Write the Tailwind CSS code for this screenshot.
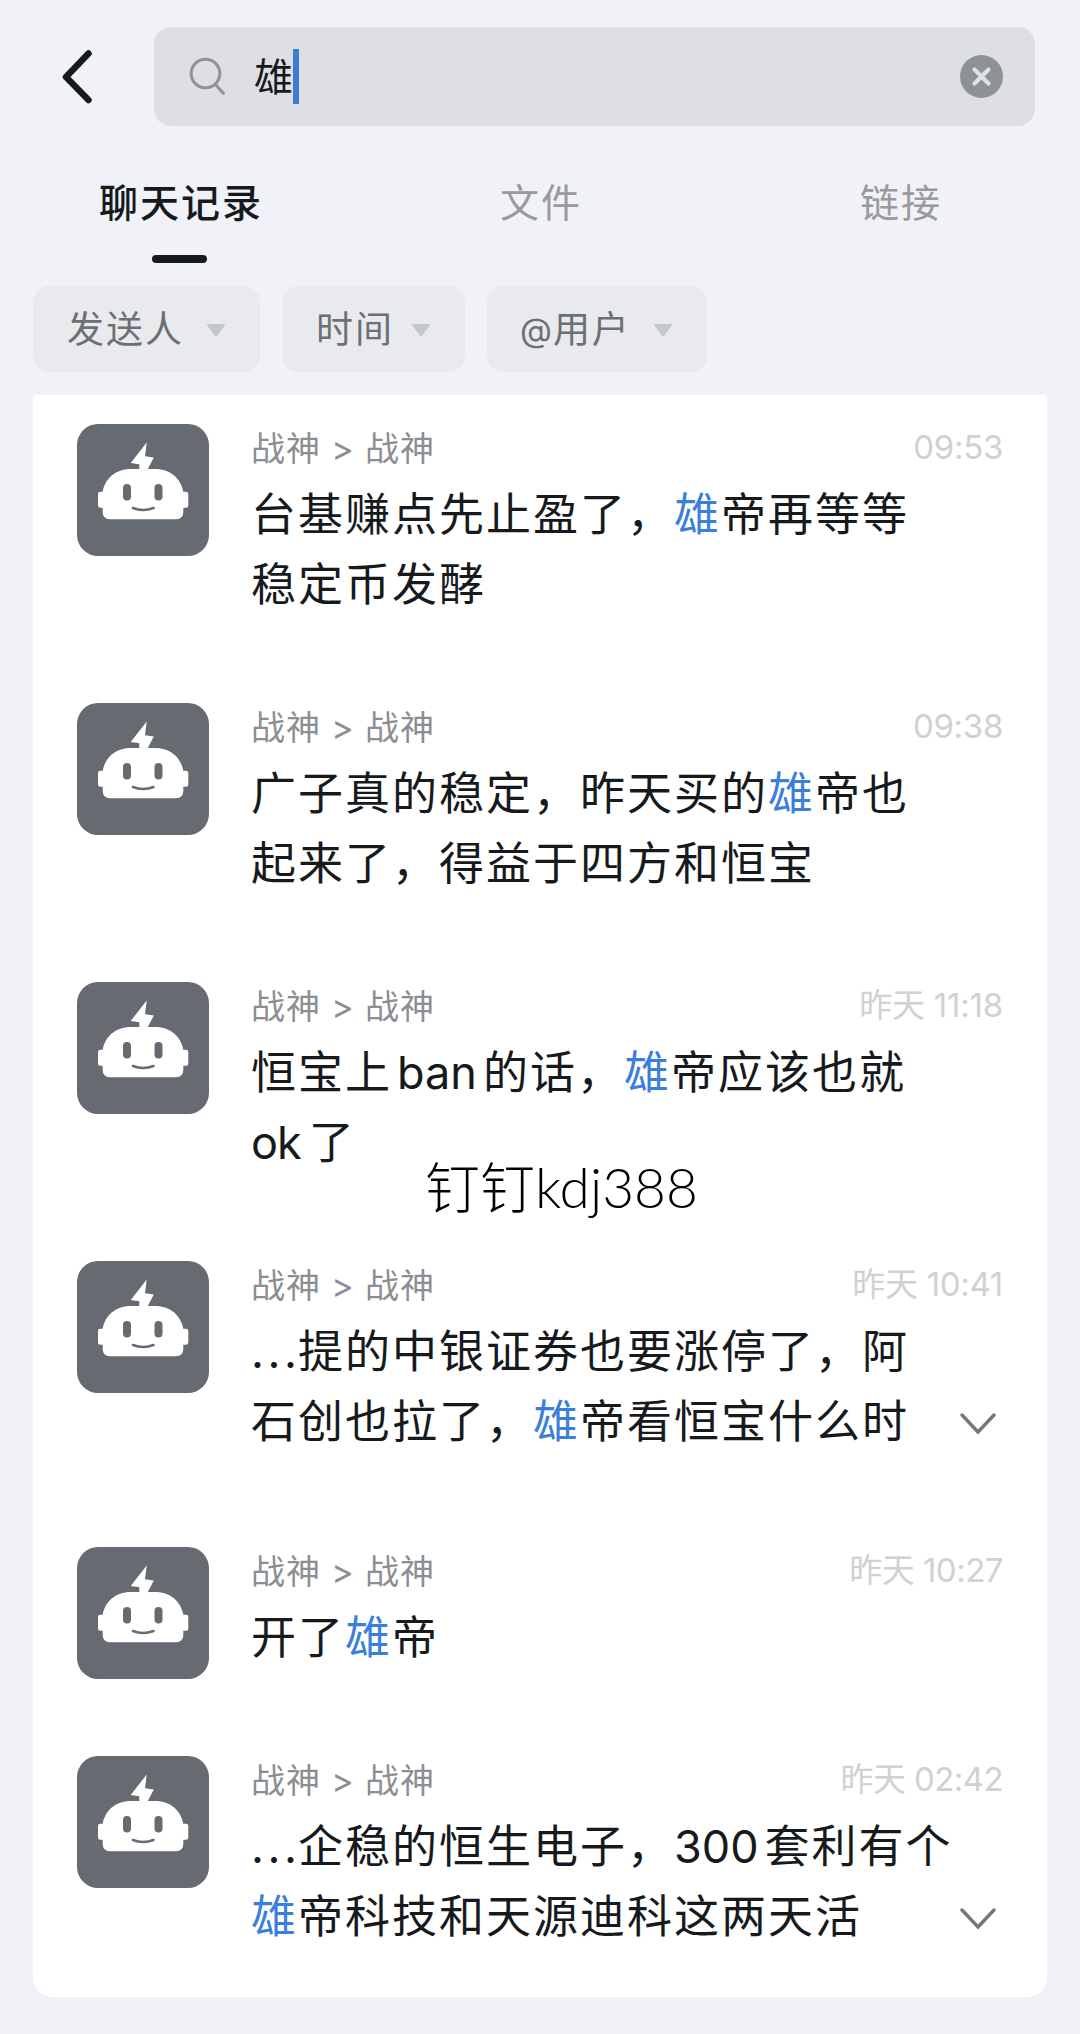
<!DOCTYPE html>
<html lang="zh-CN">
  <head>
    <meta charset="UTF-8" />
    <meta name="viewport" content="width=device-width, initial-scale=1.0" />
    <script src="https://cdn.jsdelivr.net/npm/@tailwindcss/browser@4"></script>
    <title>聊天记录</title>
  </head>
  <body class="bg-[#f0f2f7] text-[#171a1d] font-['Inter','Noto_Sans_CJK_SC',sans-serif] w-[1080px] h-[2034px] relative overflow-hidden">
    <!-- Icons -->
    <svg class="hidden">
      <symbol id="robot" viewBox="0 0 132 132">
        <rect width="132" height="132" rx="21" fill="#666b72" />
        <path d="M69.7 18.5L53.7 39L62.3 40.3V46H70.3L76.8 33.6L68 32.2Z" fill="#fff" />
        <path d="M54 45H78C94 45 104 55 106.3 67.7H109Q111.3 67.7 111.3 70V81.5Q111.3 83.7 109 83.7H106.3V88Q106.3 95.2 99 95.2H33Q25.7 95.2 25.7 88V83.7H23.3Q21 83.7 21 81.5V70Q21 67.7 23.3 67.7H25.7C28 55 38 45 54 45Z" fill="#fff" />
        <rect x="46" y="60" width="8" height="16.5" rx="4" fill="#666b72" />
        <rect x="77.5" y="60" width="8" height="16.5" rx="4" fill="#666b72" />
        <path d="M56 84Q66 88 76.5 84" fill="none" stroke="#666b72" stroke-width="2.6" stroke-linecap="round" />
      </symbol>
      <symbol id="caret" viewBox="0 0 20 13">
        <path d="M2 1H18L10 11.5Z" fill="#c3c7ca" stroke="#c3c7ca" stroke-width="2" stroke-linejoin="round" />
      </symbol>
      <symbol id="expand" viewBox="0 0 36 22">
        <path d="M2 2L18 19L34 2" fill="none" stroke="#747678" stroke-width="3.4" stroke-linecap="round" />
      </symbol>
    </svg>

    <!-- Search -->
    <div class="flex items-center pt-[27px] pl-[60px] pr-[45px]">
      <svg class="w-[34px] h-[54px]" viewBox="0 0 34 54" fill="none" stroke="#171a1d" stroke-width="6.5" stroke-linecap="round" stroke-linejoin="round">
        <path d="M28.5 3.5L6 27L28.5 50" />
      </svg>
      <div class="flex items-center flex-1 h-[99px] ml-[60px] pl-[35px] pr-[32px] rounded-[17px] bg-[#dedfe3]">
        <svg class="w-[38px] h-[40px]" viewBox="0 0 38 40" fill="none" stroke="#909396" stroke-width="3" stroke-linecap="round">
          <circle cx="16.5" cy="16.5" r="14.3" />
          <path d="M26 27L34.5 36.5" />
        </svg>
        <div class="ml-[27px] text-[39px] leading-[56px]">雄</div>
        <div class="w-[6px] h-[55px] bg-[#3d7bd6]"></div>
        <svg class="w-[43px] h-[43px] ml-auto" viewBox="0 0 43 43">
          <circle cx="21.5" cy="21.5" r="21.5" fill="#8f9295" />
          <path d="M14.5 14.5L28.5 28.5M28.5 14.5L14.5 28.5" stroke="#e0e1e5" stroke-width="4.2" stroke-linecap="round" />
        </svg>
      </div>
    </div>

    <!-- Tabs -->
    <div class="grid grid-cols-3 pt-[49px] h-[160px] text-[39px] leading-[56px] tracking-[2px] text-center text-[#989a9d]">
      <div class="flex flex-col items-center">
        <div class="pl-[2px] text-[#171a1d] font-medium">聊天记录</div>
        <div class="w-[55px] h-[8px] mt-[24px] mr-[1px] rounded-full bg-[#171a1d]"></div>
      </div>
      <div class="pl-[2px]">文件</div>
      <div class="pl-[2px]">链接</div>
    </div>

    <!-- Filters -->
    <div class="flex gap-[22px] pl-[33px] h-[109px] text-[37px] leading-[84px] tracking-[2px] text-[#6c6f73]">
      <div class="flex items-center w-[227px] h-[86px] pt-[2px] pl-[34px] rounded-[16px] bg-[#e9eaee]">
        发送人<svg class="w-[20px] h-[13px] ml-[22px]"><use href="#caret" /></svg>
      </div>
      <div class="flex items-center w-[183px] h-[86px] pt-[2px] pl-[34px] rounded-[16px] bg-[#e9eaee]">
        时间<svg class="w-[20px] h-[13px] ml-[17px]"><use href="#caret" /></svg>
      </div>
      <div class="flex items-center w-[220px] h-[86px] pt-[2px] pl-[33px] rounded-[16px] bg-[#e9eaee]">
        <span class="text-[33px] tracking-[1px]">@</span>用户<svg class="w-[20px] h-[13px] ml-[22px]"><use href="#caret" /></svg>
      </div>
    </div>

    <!-- Results -->
    <div class="mx-[33px] h-[1602px] pt-[29px] pl-[44px] pr-[44px] bg-white rounded-t-[4px] rounded-b-[20px]">
      <div class="flex h-[279px]">
        <svg class="w-[132px] h-[132px] shrink-0"><use href="#robot" /></svg>
        <div class="ml-[42px] flex-1">
          <div class="flex justify-between">
            <div class="pt-px text-[34px] leading-[48px] tracking-[0.9px] text-[#8b8e92]">战神 &gt; 战神</div>
            <div class="text-[33px] leading-[47px] tracking-[-0.3px] text-[#cfd1d4]">09:53</div>
          </div>
          <div class="mt-[7px] text-[45px] leading-[70px] tracking-[2px] whitespace-nowrap">
            台基赚点先止盈了，<span class="text-[#3a7fdb]">雄</span>帝再等等<br />稳定币发酵
          </div>
        </div>
      </div>

      <div class="flex h-[279px]">
        <svg class="w-[132px] h-[132px] shrink-0"><use href="#robot" /></svg>
        <div class="ml-[42px] flex-1">
          <div class="flex justify-between">
            <div class="pt-px text-[34px] leading-[48px] tracking-[0.9px] text-[#8b8e92]">战神 &gt; 战神</div>
            <div class="text-[33px] leading-[47px] tracking-[-0.3px] text-[#cfd1d4]">09:38</div>
          </div>
          <div class="mt-[7px] text-[45px] leading-[70px] tracking-[2px] whitespace-nowrap">
            广子真的稳定，昨天买的<span class="text-[#3a7fdb]">雄</span>帝也<br />起来了，得益于四方和恒宝
          </div>
        </div>
      </div>

      <div class="flex h-[279px]">
        <svg class="w-[132px] h-[132px] shrink-0"><use href="#robot" /></svg>
        <div class="ml-[42px] flex-1">
          <div class="flex justify-between">
            <div class="pt-px text-[34px] leading-[48px] tracking-[0.9px] text-[#8b8e92]">战神 &gt; 战神</div>
            <div class="text-[33px] leading-[47px] tracking-[-0.2px] text-[#cfd1d4]">昨天 11:18</div>
          </div>
          <div class="mt-[7px] text-[45px] leading-[70px] tracking-[2px] whitespace-nowrap">
            恒宝上<span class="tracking-[0px] ml-[5px] mr-[6px]">ban</span>的话，<span class="text-[#3a7fdb]">雄</span>帝应该也就<br /><span class="tracking-[-1px] mr-[8px]">ok</span>了
          </div>
        </div>
      </div>

      <div class="flex h-[286px]">
        <svg class="w-[132px] h-[132px] shrink-0"><use href="#robot" /></svg>
        <div class="ml-[42px] flex-1">
          <div class="flex justify-between">
            <div class="pt-px text-[34px] leading-[48px] tracking-[0.9px] text-[#8b8e92]">战神 &gt; 战神</div>
            <div class="text-[33px] leading-[47px] tracking-[-0.3px] text-[#cfd1d4]">昨天 10:41</div>
          </div>
          <div class="flex justify-between items-end pr-[7px]">
            <div class="mt-[7px] text-[45px] leading-[70px] tracking-[2px] whitespace-nowrap">
              <span class="inline-block w-[47px] tracking-[3.5px]">...</span>提的中银证券也要涨停了，阿<br />石创也拉了，<span class="text-[#3a7fdb]">雄</span>帝看恒宝什么时
            </div>
            <svg class="w-[36px] h-[22px] mb-[22px]"><use href="#expand" /></svg>
          </div>
        </div>
      </div>

      <div class="flex h-[209px]">
        <svg class="w-[132px] h-[132px] shrink-0"><use href="#robot" /></svg>
        <div class="ml-[42px] flex-1">
          <div class="flex justify-between">
            <div class="pt-px text-[34px] leading-[48px] tracking-[0.9px] text-[#8b8e92]">战神 &gt; 战神</div>
            <div class="text-[33px] leading-[47px] tracking-[-0.5px] text-[#cfd1d4]">昨天 10:27</div>
          </div>
          <div class="mt-[7px] text-[45px] leading-[70px] tracking-[2px] whitespace-nowrap">
            开了<span class="text-[#3a7fdb]">雄</span>帝
          </div>
        </div>
      </div>

      <div class="flex">
        <svg class="w-[132px] h-[132px] shrink-0"><use href="#robot" /></svg>
        <div class="ml-[42px] flex-1">
          <div class="flex justify-between">
            <div class="pt-px text-[34px] leading-[48px] tracking-[0.9px] text-[#8b8e92]">战神 &gt; 战神</div>
            <div class="text-[33px] leading-[47px] tracking-[-0.6px] text-[#cfd1d4]">昨天 02:42</div>
          </div>
          <div class="flex justify-between items-end pr-[7px]">
            <div class="mt-[7px] text-[45px] leading-[70px] tracking-[2px] whitespace-nowrap">
              <span class="inline-block w-[47px] tracking-[3.5px]">...</span>企稳的恒生电子，<span class="tracking-[0px] mr-[6px]">300</span>套利有个<br /><span class="text-[#3a7fdb]">雄</span>帝科技和天源迪科这两天活
            </div>
            <svg class="w-[36px] h-[22px] mb-[22px]"><use href="#expand" /></svg>
          </div>
        </div>
      </div>
    </div>

    <!-- Watermark -->
    <div class="absolute left-[425px] top-[1154px] text-[55px] leading-[66px] font-light text-black whitespace-nowrap font-['Lato','Noto_Sans_CJK_SC',sans-serif]">钉钉kdj388</div>
  </body>
</html>
